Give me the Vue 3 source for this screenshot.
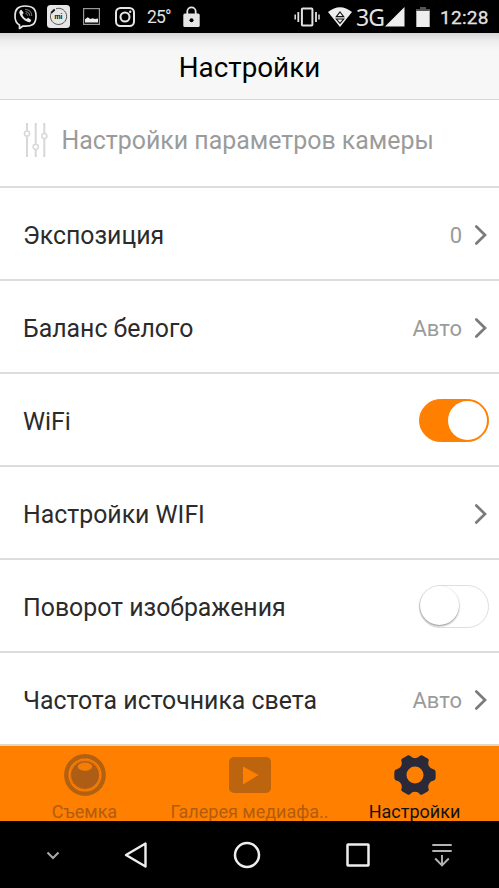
<script setup>
const rows = [
  { label: 'Экспозиция', value: '0', type: 'link' },
  { label: 'Баланс белого', value: 'Авто', type: 'link' },
  { label: 'WiFi', type: 'switch', on: true },
  { label: 'Настройки WIFI', value: '', type: 'link' },
  { label: 'Поворот изображения', type: 'switch', on: false },
  { label: 'Частота источника света', value: 'Авто', type: 'link' },
]
</script>

<template>
  <div class="screen">
    <div class="status">
      <svg class="s-viber" width="24" height="26" viewBox="0 0 24 26" fill="none" stroke="#e6e6e6" stroke-linecap="round">
        <path d="M12 2C5 2 2 5 2 12c0 5 1 7.500 4.500 9v3.500L10 22c9 .7 13-1.500 13-10C23 5 20 2 12 2z" stroke-width="1.700" stroke-linejoin="round" />
        <path d="M7 6.500l1.500-.7 2.200 3.200-1.300 1.500c.8 2.200 2 3.500 4.200 4.600l1.500-1.400 3.200 2.200c-.5 2-1.700 2.700-3.200 2.200C10.500 16.300 7.500 13 6.200 8.500z" fill="#e6e6e6" stroke="none" />
        <path d="M12.500 5.500c4 .2 6 2.300 6.200 6M12.800 7.700c2.500.2 3.700 1.500 3.900 3.700M13 9.700c1 .1 1.500.6 1.600 1.500" stroke-width=".8" stroke="#aaa" />
      </svg>
      <span class="s-mi">
        <svg width="23" height="23" viewBox="0 0 23 23">
          <rect width="23" height="23" rx="3.500" fill="#e6e6e6" />
          <path d="M4.600 7.200A8.100 8.100 0 1 0 9 3.700" fill="none" stroke="#333" stroke-width=".8" />
          <path d="M4.200 7.800l3.500-3.300" stroke="#111" stroke-width="1.800" />
        </svg>
        <b>mi</b>
      </span>
      <svg class="s-pic" width="17" height="17" viewBox="0 0 17 17">
        <rect x=".6" y=".6" width="15.800" height="15.800" fill="none" stroke="#999" stroke-width="1.200" />
        <path d="M2 14.500v-3.300l2.800-2 2.500 1.800 2.500-.8 2 .9 3.200-.6v4z" fill="#eee" />
      </svg>
      <svg class="s-insta" width="20" height="20" viewBox="0 0 20 20" fill="none" stroke="#e6e6e6" stroke-width="2">
        <rect x="1" y="1" width="18" height="18" rx="4.500" /><circle cx="10" cy="10" r="4.500" /><circle cx="15.200" cy="4.800" r="1.200" fill="#e6e6e6" stroke="none" />
      </svg>
      <span class="temp">25°</span>
      <svg class="s-lock" width="17" height="22" viewBox="0 0 17 22">
        <path d="M4.300 8V5.500a4.200 4.200 0 0 1 8.400 0V8" fill="none" stroke="#e6e6e6" stroke-width="1.800" />
        <rect x=".3" y="7.500" width="16.400" height="13.500" rx="1.500" fill="#e6e6e6" /><circle cx="8.500" cy="14.200" r="2" fill="#000" />
      </svg>
      <span class="fill"></span>
      <svg class="s-vib" width="26" height="20" viewBox="0 0 26 20" fill="none" stroke="#e2e2e2">
        <rect x="7.900" y="1.400" width="10.500" height="17.200" rx=".8" stroke-width="2" />
        <path d="M4.300 5v10M22 5v10" stroke-width="1.800" /><path d="M1.200 7.500v5M25 7.500v5" stroke-width="1.500" />
      </svg>
      <svg class="s-wifi" width="24" height="20" viewBox="0 0 24 20">
        <path d="M0 5Q12-4.500 24 5L12 20z" fill="#eee" />
        <path d="M12 5l3.700 4.600H8.300zM8.300 12h7.400L12 16.300z" fill="none" stroke="#111" stroke-width="1.100" />
      </svg>
      <span class="net">3G</span>
      <svg class="s-sig" width="20" height="20" viewBox="0 0 20 20"><path d="M0 19.500L19.500 0v19.500z" fill="#eee" /></svg>
      <svg class="s-bat" width="14" height="20" viewBox="0 0 14 20">
        <path d="M4 0h6v2h4v3H0V2h4z" fill="#555" /><path d="M.3 4h13.400v16H.3z" fill="#eee" />
      </svg>
      <span class="clock">12:28</span>
    </div>

    <header class="title"><h1>Настройки</h1></header>

    <main>
      <div class="section">
        <svg width="25" height="36" viewBox="0 0 25 36" fill="none" stroke="#d8d8d8" stroke-width="2">
          <path d="M4 1v7.500M4 14.500V35M12.700 1v20.500M12.700 27.500V35M21.300 1v10M21.300 17V35" />
          <g stroke-width="1.500"><circle cx="4" cy="11.500" r="2.600" /><circle cx="12.700" cy="24.800" r="2.600" /><circle cx="21.300" cy="14" r="2.600" /></g>
        </svg>
        <span>Настройки параметров камеры</span>
      </div>
      <div v-for="r in rows" :key="r.label" class="row">
        <span class="label">{{ r.label }}</span>
        <template v-if="r.type === 'link'">
          <span class="value">{{ r.value }}</span>
          <svg class="chev" width="14" height="22" viewBox="0 0 14 22"><path d="M2.300 2.500L11 11l-8.700 8.500" fill="none" stroke="#7b7b7b" stroke-width="2.700" stroke-linecap="round" /></svg>
        </template>
        <span v-else :class="['switch', { on: r.on }]"><i></i></span>
      </div>
    </main>

    <nav class="tabs">
      <div class="tab">
        <svg width="42" height="42" viewBox="0 0 42 42">
          <circle cx="21" cy="21" r="18.700" fill="none" stroke="#b46011" stroke-width="4.400" />
          <circle cx="21" cy="21" r="15.200" fill="#b96313" />
          <circle cx="21" cy="21" r="14.600" fill="#ad5d15" stroke="#ee7908" stroke-width="1.300" />
          <ellipse cx="21" cy="12.700" rx="7.300" ry="4.100" fill="#f57c05" />
        </svg>
        <span>Съемка</span>
      </div>
      <div class="tab">
        <svg width="42" height="42" viewBox="0 0 42 42"><rect y="3" width="42" height="36" rx="5" fill="#bc650e" /><path d="M14 12.500v18L29.500 21z" fill="#ff8000" /></svg>
        <span>Галерея медиафа..</span>
      </div>
      <div class="tab active">
        <svg width="42" height="42" viewBox="0 0 42 42">
          <path fill="#29293a" fill-rule="evenodd" d="M14 1.300Q15 .8 16 1.800Q18 4.200 21 4.200Q24 4.200 26 1.800Q27 .8 28 1.300L34 4.700Q35.100 5.500 34.700 6.800Q33.600 9.800 35 12.300Q36.500 14.900 39.800 15.500Q41.300 15.900 41.500 17.200Q41.900 21 41.500 24.800Q41.300 26.100 39.800 26.500Q36.500 27.100 35 29.700Q33.600 32.200 34.700 35.200Q35.100 36.500 34 37.300L28 40.700Q27 41.200 26 40.200Q24 37.800 21 37.800Q18 37.800 16 40.200Q15 41.200 14 40.700L8 37.300Q6.900 36.500 7.300 35.200Q8.400 32.200 7 29.700Q5.500 27.100 2.200 26.500Q.7 26.100.5 24.800Q.1 21 .5 17.200Q.7 15.900 2.200 15.500Q5.500 14.900 7 12.300Q8.400 9.800 7.300 6.800Q6.900 5.500 8 4.700zM21 12.500a8.500 8.500 0 1 0 0 17a8.500 8.500 0 1 0 0-17z" />
        </svg>
        <span>Настройки</span>
      </div>
    </nav>

    <div class="sysnav">
      <svg class="n-down" width="14" height="9" viewBox="0 0 14 9"><path d="M1.500 1.500L7 7l5.500-5.500" fill="none" stroke="#aaa" stroke-width="2" /></svg>
      <svg class="n-back" width="24" height="28" viewBox="0 0 24 28"><path d="M21.500 2.500v23L2 14z" fill="none" stroke="#eee" stroke-width="2.400" stroke-linejoin="round" /></svg>
      <svg class="n-home" width="28" height="28" viewBox="0 0 28 28"><circle cx="14" cy="14" r="12" fill="none" stroke="#eee" stroke-width="2.500" /></svg>
      <svg class="n-recent" width="24" height="24" viewBox="0 0 24 24"><rect x="1.500" y="1.500" width="21" height="21" rx=".5" fill="none" stroke="#eee" stroke-width="2.500" /></svg>
      <svg class="n-drop" width="20" height="24" viewBox="0 0 20 24" fill="none" stroke="#b4b4b4" stroke-width="1.900"><path d="M.3 2h19.400M.3 8h19.400M10 12v10.500M3.200 15.500L10 22.300l6.800-6.800" /></svg>
    </div>
  </div>
</template>

<style>
body { margin: 0; background: #fff; }
</style>

<style scoped>
.screen { width: 499px; height: 888px; display: flex; flex-direction: column; overflow: hidden; background: #fff; font-family: Roboto, sans-serif; color: #2b2b2b; }
svg { display: block; flex: none; }
.status { height: 33px; flex: none; background: #000; display: flex; align-items: center; color: #e2e2e2; white-space: nowrap; }
.s-viber { margin: 0 10px 0 13px; }
.s-mi { display: grid; width: 23px; height: 23px; place-items: center; }
.s-mi > * { grid-area: 1 / 1; }
.s-mi b { color: #111; font-size: 7px; line-height: 8px; }
.s-pic { margin-left: 13px; }
.s-insta { margin-left: 15px; }
.temp { margin-left: 12px; width: 24px; font-size: 17.500px; letter-spacing: -.8px; line-height: 33px; padding-top: 1px; }
.s-lock { margin-left: 12px; }
.fill { flex: 1; }
.s-wifi { margin-left: 8px; }
.net { margin-left: 4px; width: 25px; font-family: "Noto Sans", sans-serif; font-size: 23px; letter-spacing: -1px; line-height: 33px; padding-top: 1px; }
.s-sig { margin-left: 4px; }
.s-bat { margin-left: 11px; }
.clock { margin-left: 10px; width: 59px; font-size: 19px; font-weight: 400; -webkit-text-stroke: .3px #e2e2e2; letter-spacing: .3px; line-height: 33px; padding-top: 2px; }
.title { height: 66px; flex: none; display: flex; align-items: center; justify-content: center; background: linear-gradient(#d5d5d5, #eeeeee 8px, #f7f7f7 18px, #f7f7f7); border-bottom: 1px solid #d6d6d6; color: #000; }
h1 { margin: 3px 0 0; font-size: 27.800px; font-weight: 400; line-height: 34px; white-space: nowrap; }
.section { height: 86px; display: flex; align-items: center; padding: 0 0 6px 23px; box-sizing: border-box; color: #9b9b9b; font-size: 24.900px; gap: 13.500px; white-space: nowrap; }
.row { height: 93px; box-sizing: border-box; border-top: 2px solid #dcdcdc; display: flex; align-items: center; padding: 3px 11px 0 23px; white-space: nowrap; font-size: 24.850px; }
.label { flex: 1; }
.value { color: #9b9b9b; font-size: 22px; }
.chev { margin-left: 12px; }
.switch { width: 70px; height: 43px; box-sizing: border-box; border: 1px solid #dedede; border-radius: 22px; display: flex; margin: -1px -1px 0 0; }
.switch i { width: 39px; height: 39px; border-radius: 50%; background: #fff; box-shadow: 0 1px 2px rgba(0,0,0,.48); }
.switch.on { background: #ff8000; border-color: #ff8000; justify-content: flex-end; align-items: center; padding-right: 1px; }
.switch.on i { box-shadow: none; }
.tabs { height: 77px; flex: none; box-sizing: border-box; border-top: 2px solid #e0d5cb; background: #ff8000; display: flex; overflow: hidden; padding: 0 2px; }
.tab { flex: 1; display: flex; flex-direction: column; align-items: center; padding-top: 8px; font-size: 18px; color: #b15d0d; white-space: nowrap; }
.tab span { line-height: 22px; margin-top: 5px; }
.active { color: #111; }
.sysnav { flex: 1; background: #000; display: flex; align-items: center; padding-left: 46px; }
.n-down { margin-top: 2px; }
.n-back { margin-left: 64px; }
.n-home { margin-left: 85px; }
.n-recent { margin-left: 85px; }
.n-drop { margin-left: 62px; }
</style>
